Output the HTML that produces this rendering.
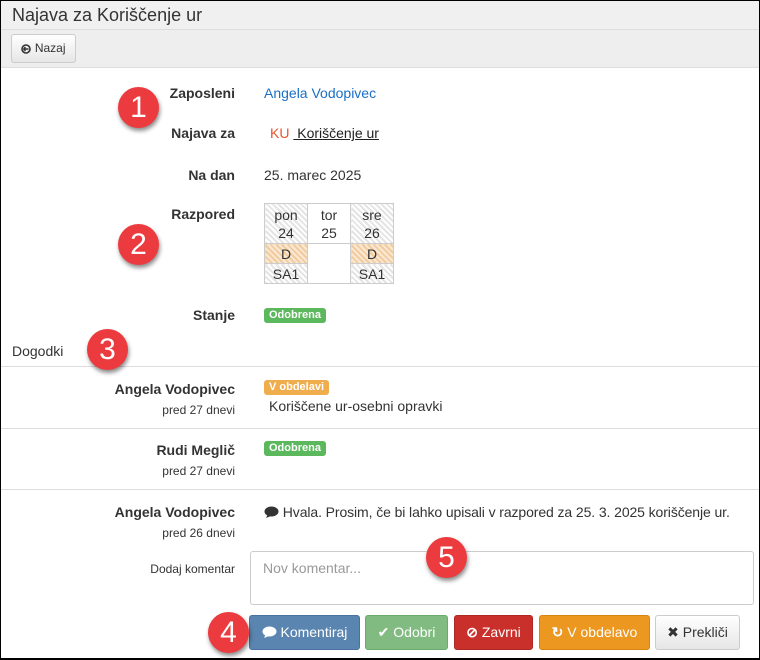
<!DOCTYPE html>
<html><head><meta charset="utf-8"><style>
*{box-sizing:border-box;margin:0;padding:0}
body{width:760px;height:660px;position:relative;background:#fff;font-family:"Liberation Sans",sans-serif;font-size:14px;color:#333;overflow:hidden}
.frame{position:absolute;left:0;top:0;width:760px;height:660px;border:1px solid #000;border-bottom-width:2px;pointer-events:none}
.a{position:absolute;white-space:nowrap}
.lbl{position:absolute;font-weight:bold;text-align:right;width:200px;left:35px}
.sm{font-size:12px;font-weight:normal}
.badge{position:absolute;font-size:11px;font-weight:bold;color:#fff;border-radius:3px;padding:1px 5px;line-height:13px}
.hr{position:absolute;left:1px;right:1px;height:1px;background:#ddd}
.c{position:absolute;width:41px;height:41px;border-radius:50%;background:#ec3b3f;color:#fff;font-size:30px;text-align:center;line-height:41px;box-shadow:1px 3px 4px rgba(0,0,0,.45)}
.btn{position:absolute;top:615px;height:35px;border-radius:3px;color:#fff;font-size:14px;line-height:33px;text-align:center;border:1px solid}
td{width:43px;height:20px;text-align:center;border:1px solid #ccc;font-size:14px;line-height:18px;padding:0}
.h{background:repeating-linear-gradient(45deg,#e4e4e4 0 2px,#fff 2px 4px)}
.o{background:repeating-linear-gradient(45deg,#f0cca0 0 2px,#fbe8d2 2px 4px)}
svg{vertical-align:-2px}
</style></head><body>
<div class="a" style="left:1px;top:1px;width:758px;height:29px;background:#f0f0f0;border-bottom:1px solid #ddd"></div>
<div class="a" style="left:12px;top:5px;font-size:18px;color:#333">Najava za Koriščenje ur</div>
<div class="a" style="left:1px;top:30px;width:758px;height:38px;background:#eee;border-bottom:1px solid #ddd"></div>
<div class="a" style="left:11px;top:34px;width:65px;height:29px;border:1px solid #ccc;border-radius:3px;background:linear-gradient(#fff,#e6e6e6);font-size:12px;line-height:27px;text-align:center"><svg width="10" height="10" viewBox="0 0 10 10"><circle cx="5" cy="5" r="4" fill="none" stroke="#333" stroke-width="1.6"/><path d="M2.5 5h5M2.5 5l2-2M2.5 5l2 2" stroke="#333" stroke-width="1.4" fill="none"/></svg> Nazaj</div>

<div class="lbl" style="top:85px">Zaposleni</div>
<div class="a" style="left:264px;top:85px;color:#1a6fc4">Angela Vodopivec</div>
<div class="lbl" style="top:125px">Najava za</div>
<div class="a" style="left:270px;top:125px"><span style="color:#e8542c">KU</span> <span style="text-decoration:underline;color:#222">&nbsp;Koriščenje ur</span></div>
<div class="lbl" style="top:167px">Na dan</div>
<div class="a" style="left:264px;top:167px">25. marec 2025</div>
<div class="lbl" style="top:206px">Razpored</div>
<table class="a" style="left:264px;top:203px;border-collapse:collapse">
<tr><td class="h" style="height:40px">pon<br>24</td><td style="height:40px">tor<br>25</td><td class="h" style="height:40px">sre<br>26</td></tr>
<tr><td class="o">D</td><td rowspan="2"></td><td class="o">D</td></tr>
<tr><td class="h">SA1</td><td class="h">SA1</td></tr>
</table>
<div class="lbl" style="top:307px">Stanje</div>
<div class="badge" style="left:264px;top:308px;background:#5cb85c">Odobrena</div>
<div class="a" style="left:12px;top:343px">Dogodki</div>
<div class="hr" style="top:366px"></div>
<div class="lbl" style="top:381px">Angela Vodopivec</div>
<div class="lbl sm" style="top:403px">pred 27 dnevi</div>
<div class="badge" style="left:264px;top:380px;background:#f0ad4e">V obdelavi</div>
<div class="a" style="left:269px;top:398px">Koriščene ur-osebni opravki</div>
<div class="hr" style="top:428px"></div>
<div class="lbl" style="top:442px">Rudi Meglič</div>
<div class="lbl sm" style="top:464px">pred 27 dnevi</div>
<div class="badge" style="left:264px;top:441px;background:#5cb85c">Odobrena</div>
<div class="hr" style="top:489px"></div>
<div class="lbl" style="top:504px">Angela Vodopivec</div>
<div class="lbl sm" style="top:526px">pred 26 dnevi</div>
<div class="a" style="left:264px;top:504px;letter-spacing:-0.1px"><svg width="15" height="13" viewBox="0 0 15 13"><ellipse cx="7.5" cy="5.5" rx="7" ry="5" fill="#333"/><path d="M2 12l2-4 3 2z" fill="#333"/></svg> Hvala. Prosim, če bi lahko upisali v razpored za 25. 3. 2025 koriščenje ur.</div>
<div class="lbl sm" style="top:562px">Dodaj komentar</div>
<div class="a" style="left:250px;top:551px;width:504px;height:54px;border:1px solid #ccc;border-radius:3px;padding:8px 12px;color:#999">Nov komentar...</div>
<div class="btn" style="left:249px;width:111px;background:#5a85b0;border-color:#4a72a0"><svg width="15" height="13" viewBox="0 0 15 13"><ellipse cx="7.5" cy="5.5" rx="7" ry="5" fill="#fff"/><path d="M2 12l2-4 3 2z" fill="#fff"/></svg> Komentiraj</div>
<div class="btn" style="left:365px;width:83px;background:#82bb82;border-color:#6aaa6a">✔ Odobri</div>
<div class="btn" style="left:454px;width:79px;background:#c9302c;border-color:#ac2925"><b>⊘</b> Zavrni</div>
<div class="btn" style="left:539px;width:111px;background:#ec971f;border-color:#d58512"><b>↻</b> V obdelavo</div>
<div class="btn" style="left:655px;width:85px;background:linear-gradient(#fff,#e6e6e6);border-color:#ccc;color:#333">✖ Prekliči</div>

<div class="c" style="left:118px;top:87px">1</div>
<div class="c" style="left:118px;top:224px">2</div>
<div class="c" style="left:87px;top:329px">3</div>
<div class="c" style="left:208px;top:612px">4</div>
<div class="c" style="left:426px;top:537px">5</div>
<div class="frame"></div>
</body></html>
